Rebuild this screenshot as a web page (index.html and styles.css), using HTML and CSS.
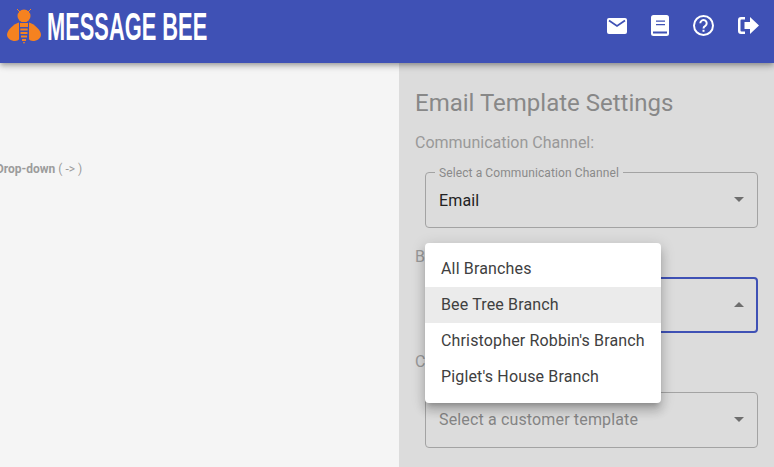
FILE: index.html
```html
<!DOCTYPE html>
<html lang="en">
<head>
<meta charset="utf-8">
<title>Message Bee</title>
<link rel="stylesheet" href="styles.css">
</head>
<body>
<header class="topbar">
  <div class="brand">
    <svg class="bee" viewBox="0 0 36 37" width="36" height="37" aria-hidden="true">
      <path d="M11 1l4 4M25 1l-4 4" fill="none" stroke="#f58220" stroke-width="1"/>
      <circle cx="18" cy="8" r="6.500" fill="#f58220"/>
      <path d="M13 14.500C8 15.500 1 22.500 1 26.500c0 4 4 6.500 8 6.500 4 0 5-3 5-6z" fill="#f58220"/>
      <path d="M23 14.500c5 1 12 8 12 12 0 4-4 6.500-8 6.500-4 0-5-3-5-6z" fill="#f58220"/>
      <path d="M13 14h10v17l-5 6-5-6z" fill="#3f51b5"/>
      <path d="M14 15h8v4h-8zM14.300 20.500h7.400v2h-7.400zM14.500 24h7v2h-7zM15 27.500h6v2h-6zM16 31h4v2h-4zM17 34h2l-1 2z" fill="#f58220"/>
    </svg>
    <span class="wordmark"><span class="wordmark-text">MESSAGE BEE</span></span>
  </div>
  <nav class="actions">
    <svg class="icon" viewBox="0 0 20 16" width="20" height="16"><rect width="20" height="16" rx="2" fill="#fff"/><path d="M2 2.500l8 5.500 8-5.500" fill="none" stroke="#3f51b5" stroke-width="1.700"/></svg>
    <svg class="icon" viewBox="0 0 18 21" width="18" height="21"><rect width="18" height="21" rx="2.500" fill="#fff"/><path d="M5 5.500h9v1.300H5zM5 9h9v1.300H5zM2 16.500h14v2H2z" fill="#3f51b5"/></svg>
    <svg class="icon" viewBox="0 0 21 21" width="21" height="21"><circle cx="10.500" cy="10.500" r="9.500" fill="none" stroke="#fff" stroke-width="2"/><path d="M7.300 8.200a3.200 3.200 0 1 1 5 2.700c-1.100.7-1.800 1.200-1.800 2.600" fill="none" stroke="#fff" stroke-width="2"/><rect x="9.500" y="14.800" width="2" height="2" fill="#fff"/></svg>
    <svg class="icon" viewBox="0 0 21 17" width="21" height="17"><path d="M12 0l9 8.500-9 8.500v-5H6.500V5H12zM7 0v2.500H3.500a1 1 0 0 0-1 1v10a1 1 0 0 0 1 1H7V17H3a3 3 0 0 1-3-3V3a3 3 0 0 1 3-3z" fill="#fff"/></svg>
  </nav>
</header>
<main class="layout">
  <section class="preview">
    <p class="hint"><b>Drop-down</b> ( -&gt; )</p>
  </section>
  <aside class="settings">
    <h2 class="title">Email Template Settings</h2>
    <div class="group group-first">
      <div class="group-label">Communication Channel:</div>
      <div class="field field-first">
        <span class="notch">Select a Communication Channel</span>
        <span class="value value-filled">Email</span>
        <span class="arrow"></span>
      </div>
    </div>
    <div class="group">
      <div class="group-label">B</div>
      <div class="field field-focus">
        <span class="arrow arrow-up"></span>
      </div>
    </div>
    <div class="group">
      <div class="group-label">C</div>
      <div class="field">
        <span class="value value-muted">Select a customer template</span>
        <span class="arrow"></span>
      </div>
    </div>
    <ul class="menu">
      <li class="menu-item">All Branches</li>
      <li class="menu-item menu-item-active">Bee Tree Branch</li>
      <li class="menu-item">Christopher Robbin's Branch</li>
      <li class="menu-item">Piglet's House Branch</li>
    </ul>
  </aside>
</main>
</body>
</html>
```
FILE: styles.css
```css
* { box-sizing: border-box; }
html, body { margin: 0; height: 100%; overflow: hidden; }
body {
  font-family: Roboto, "Liberation Sans", sans-serif;
  background: #f5f5f5;
  display: flex;
  flex-direction: column;
}
.topbar {
  height: 63px;
  flex: none;
  background: #3f51b5;
  display: flex;
  align-items: center;
  justify-content: space-between;
  padding: 0 15px 12px 6px;
  box-shadow: 0 2px 4px -1px rgba(0,0,0,.2), 0 4px 5px rgba(0,0,0,.14), 0 1px 10px rgba(0,0,0,.12);
  position: relative;
  z-index: 2;
}
.brand { display: flex; align-items: center; gap: 5px; margin-top: 2px; }
.bee { display: block; }
.wordmark { display: block; width: 160px; height: 36px; }
.wordmark-text {
  font-family: "Liberation Sans", sans-serif;
  font-weight: 700;
  font-size: 39px;
  line-height: 36px;
  color: #fff;
  display: inline-block;
  white-space: nowrap;
  transform: scaleX(.56);
  transform-origin: left center;
}
.actions { display: flex; align-items: center; gap: 24px; }
.icon { display: block; }
.layout { flex: 1; display: flex; min-height: 0; }
.preview { width: 399px; flex: none; overflow: hidden; background: #f5f5f5; padding-top: 98px; }
.hint { margin: 0 0 0 -4px; font-size: 12px; line-height: 16px; color: #9c9c9c; white-space: nowrap; }
.settings {
  flex: 1;
  background: #dcdcdc;
  padding: 24px 16px 0;
  position: relative;
}
.title { margin: 0; font-size: 24px; font-weight: 400; line-height: 32px; color: #888; }
.group { margin-top: 17px; }
.group-first { margin-top: 12px; }
.group-label { font-size: 16px; line-height: 24px; color: #999; }
.field {
  margin: 18px 0 0 10px;
  height: 56px;
  width: 333px;
  border: 1px solid #a3a3a3;
  border-radius: 4px;
  padding: 0 13px;
  position: relative;
  display: flex;
  align-items: center;
}
.field-first { margin-top: 17px; }
.notch {
  position: absolute;
  left: 9px;
  top: -6px;
  padding: 0 4px;
  background: #dcdcdc;
  font-size: 12px;
  line-height: 12px;
  color: #8a8a8a;
  letter-spacing: .1px;
  white-space: nowrap;
}
.field-focus { border: 2px solid #3f51b5; margin-top: 8px; }
.value { font-size: 16px; line-height: 24px; color: #222; letter-spacing: .15px; }
.value-filled { padding-top: 2px; }
.value-muted { color: #858585; }
.arrow {
  position: absolute;
  right: 13px;
  top: 24px;
  width: 0;
  height: 0;
  border: 5px solid transparent;
  border-top-color: #6e6e6e;
  border-bottom: 0;
}
.arrow-up { border-top: 0; border-bottom: 5px solid #6e6e6e; top: 23px; right: 12px; }
.menu {
  position: absolute;
  left: 26px;
  top: 180px;
  width: 236px;
  margin: 0;
  padding: 8px 0;
  list-style: none;
  background: #fff;
  border-radius: 4px;
  box-shadow: 0 5px 5px -3px rgba(0,0,0,.2), 0 8px 10px 1px rgba(0,0,0,.14), 0 3px 14px 2px rgba(0,0,0,.12);
}
.menu-item { height: 36px; padding: 0 16px; font-size: 16px; line-height: 36px; color: #404040; letter-spacing: .15px; white-space: nowrap; }
.menu-item-active { background: #ebebeb; }
```
